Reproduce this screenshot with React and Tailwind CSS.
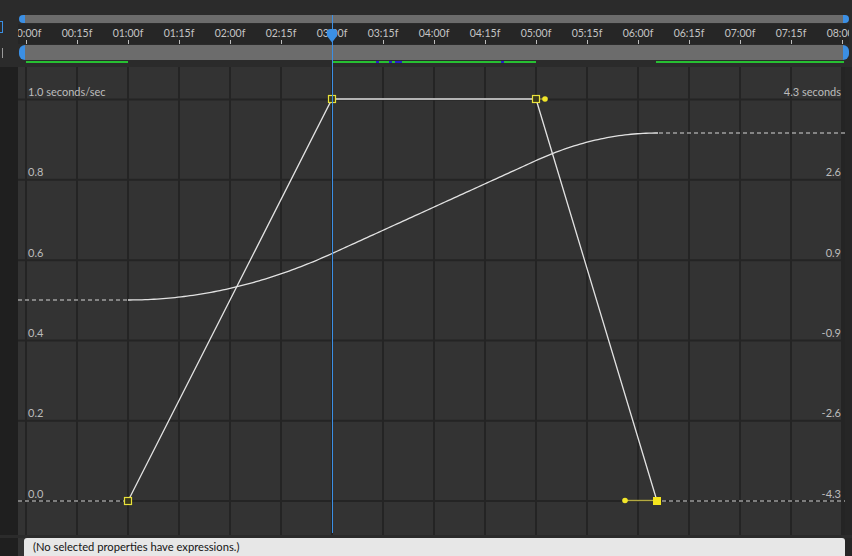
import React from 'react';

const X0 = 26;
const STEP = 51;
const LABELS = [
  '00:00f', '00:15f', '01:00f', '01:15f', '02:00f', '02:15f', '03:00f', '03:15f', '04:00f',
  '04:15f', '05:00f', '05:15f', '06:00f', '06:15f', '07:00f', '07:15f', '08:00f',
];
const ROWS = [97.5, 177.8, 258.2, 338.5, 418.8, 499];
const LEFT = ['1.0 seconds/sec', '0.8', '0.6', '0.4', '0.2', '0.0'];
const RIGHT = ['4.3 seconds', '2.6', '0.9', '-0.9', '-2.6', '-4.3'];
const BLUE = '#3b8fe4';
const font = { fontFamily: 'Lato, "Open Sans", sans-serif' };

// speed is a trapezoid; the value graph is its integral
function speedAt(x) {
  if (x < 128) return 0;
  if (x < 332) return (x - 128) / 204;
  if (x < 536) return 1;
  if (x < 657) return 1 - (x - 536) / 121;
  return 0;
}

function valuePath() {
  const total = 102 + 204 + 60.5;
  let area = 0;
  let d = 'M128,298';
  for (let x = 128; x <= 657; x += 1) {
    area += (speedAt(x) + speedAt(x + 1)) / 2;
    if (x % 3 === 0 || x === 657) {
      const y = 298 - (Math.min(area, total) / total) * 167;
      d += ` L${x + 1},${y.toFixed(2)}`;
    }
  }
  return d;
}

function Keyframe({ x, y }) {
  return <rect x={x - 3.5} y={y - 3.5} width="7" height="7" fill="#3b3a1c" stroke="#e9e23a" strokeWidth="1.2" />;
}

function Graph() {
  return (
    <svg width="827" height="468" className="block">
      <g transform="translate(-18,-65)">
        <rect x="18" y="65" width="827" height="468" fill="#333333" />
        {LABELS.map((_, i) => (
          <line key={i} x1={X0 + i * STEP} y1="65" x2={X0 + i * STEP} y2="533" stroke="#242424" strokeWidth="2" />
        ))}
        <line x1="844" y1="65" x2="844" y2="533" stroke="#242424" strokeWidth="2" />
        {ROWS.map((y) => (
          <line key={y} x1="18" y1={y} x2="845" y2={y} stroke="#242424" strokeWidth="2" />
        ))}
        <g style={font} fontSize="11" fill="#bcbcbc">
          {LEFT.map((t, i) => (
            <text key={t} x="28" y={ROWS[i] - 3.5}>{t}</text>
          ))}
          {RIGHT.map((t, i) => (
            <text key={t} x="841" y={ROWS[i] - 3.5} textAnchor="end">{t}</text>
          ))}
        </g>

        {/* dashed holds */}
        <g stroke="#d6d6d6" strokeWidth="1.2" strokeDasharray="4 3">
          <line x1="18" y1="298" x2="128" y2="298" />
          <line x1="659" y1="131" x2="845" y2="131" />
          <line x1="18" y1="499" x2="124" y2="499" />
          <line x1="662" y1="499" x2="845" y2="499" />
        </g>

        <path d={valuePath()} fill="none" stroke="#e2e2e2" strokeWidth="1.3" />
        <path d="M128,499 L332,97 L536,97 L657,499" fill="none" stroke="#e2e2e2" strokeWidth="1.3" />

        {/* handles */}
        <line x1="536" y1="97" x2="545" y2="97" stroke="#b4aa42" strokeWidth="1.2" />
        <circle cx="545" cy="97" r="2.8" fill="#f2e629" />
        <line x1="625" y1="498.5" x2="657" y2="498.5" stroke="#b4aa42" strokeWidth="1.4" />
        <circle cx="625" cy="498.5" r="2.8" fill="#f2e629" />

        <Keyframe x={128} y={499} />
        <Keyframe x={332} y={97} />
        <Keyframe x={536} y={97} />
        <rect x="653" y="495" width="8" height="8" fill="#f5e61e" />
      </g>
    </svg>
  );
}

function Bar({ h }) {
  return (
    <div className={`flex w-[830px] ${h}`}>
      <div className="w-[6px] rounded-l-full bg-[#3b8fe4]" />
      <div className="flex-1 bg-[#6c6c6c]" />
      <div className="w-[6px] rounded-r-full bg-[#3b8fe4]" />
    </div>
  );
}

export default function App() {
  return (
    <div className="relative flex h-[556px] w-[852px] flex-col overflow-hidden bg-[#2b2b2b]" style={font}>
      <div className="h-[15px]" />

      {/* navigator */}
      <div className="flex h-[9px]">
        <div className="w-[19px]" />
        <Bar h="h-[8px]" />
      </div>

      {/* ruler */}
      <div className="flex h-[20px]">
        <div className="relative w-[18px]">
          <div className="absolute left-0 top-[-3px] h-[12px] w-[3px] border border-l-0 border-[#3b8fe4]" />
        </div>
        <div className="w-[831px] overflow-hidden bg-[#262626]">
          <div className="ml-[-17.5px] flex">
            {LABELS.map((t) => (
              <div key={t} className="flex w-[51px] shrink-0 flex-col items-center">
                <span className="mt-[3px] h-[13px] text-[10.5px] leading-[13px] text-[#c4c4c4]">{t}</span>
                <span className="h-[4px] w-px bg-[#bdbdbd]" />
              </div>
            ))}
          </div>
        </div>
      </div>

      {/* work area */}
      <div className="flex h-[17px] pt-[1px]">
        <div className="flex w-[19px] items-center">
          <div className="ml-[2px] h-[10px] w-px bg-[#9a9a9a]" />
        </div>
        <Bar h="h-[15px]" />
      </div>

      {/* layer bar */}
      <div className="flex h-[4px]">
        <div className="w-[26px]" />
        <div className="h-[2px] w-[102px] bg-[#27c032]" />
        <div className="w-[204px]" />
        <div className="flex h-[2px] w-[204px] bg-[#27c032]">
          <div className="w-[44px]" />
          <div className="w-[3px] bg-[#2424c8]" />
          <div className="w-[10px]" />
          <div className="w-[3px] bg-[#2424c8]" />
          <div className="w-[3px]" />
          <div className="w-[7px] bg-[#2424c8]" />
          <div className="w-[99px]" />
          <div className="w-[3px] bg-[#2424c8]" />
        </div>
        <div className="w-[120px]" />
        <div className="h-[2px] w-[188px] bg-[#27c032]" />
      </div>
      <div className="h-[2px]" />

      {/* graph */}
      <div className="flex h-[468px]">
        <div className="w-[18px] bg-[#1f1f1f]" />
        <Graph />
        <div className="flex-1 bg-[#262626]" />
      </div>

      {/* expression field */}
      <div className="flex flex-1 pt-[3px]">
        <div className="w-[18px] bg-[#1f1f1f]" />
        <div className="w-[6px] bg-[#333333]" />
        <div className="flex w-[821px] items-center rounded-t-[3px] bg-[#e7e7e7] pl-[9px]">
          <span className="text-[11.2px] text-[#151515]">(No selected properties have expressions.)</span>
        </div>
        <div className="flex-1 bg-[#262626]" />
      </div>

      {/* current time indicator */}
      <div className="absolute left-[331.5px] top-[15px] h-[518px] w-px bg-[#3b8fe4]" />
      <svg className="absolute left-[326px] top-[29px]" width="12" height="14" viewBox="0 0 12 14">
        <path d="M1,3 Q1,0 4,0 L8,0 Q11,0 11,3 L11,7 L6,13.5 L1,7 Z" fill={BLUE} />
      </svg>
    </div>
  );
}
